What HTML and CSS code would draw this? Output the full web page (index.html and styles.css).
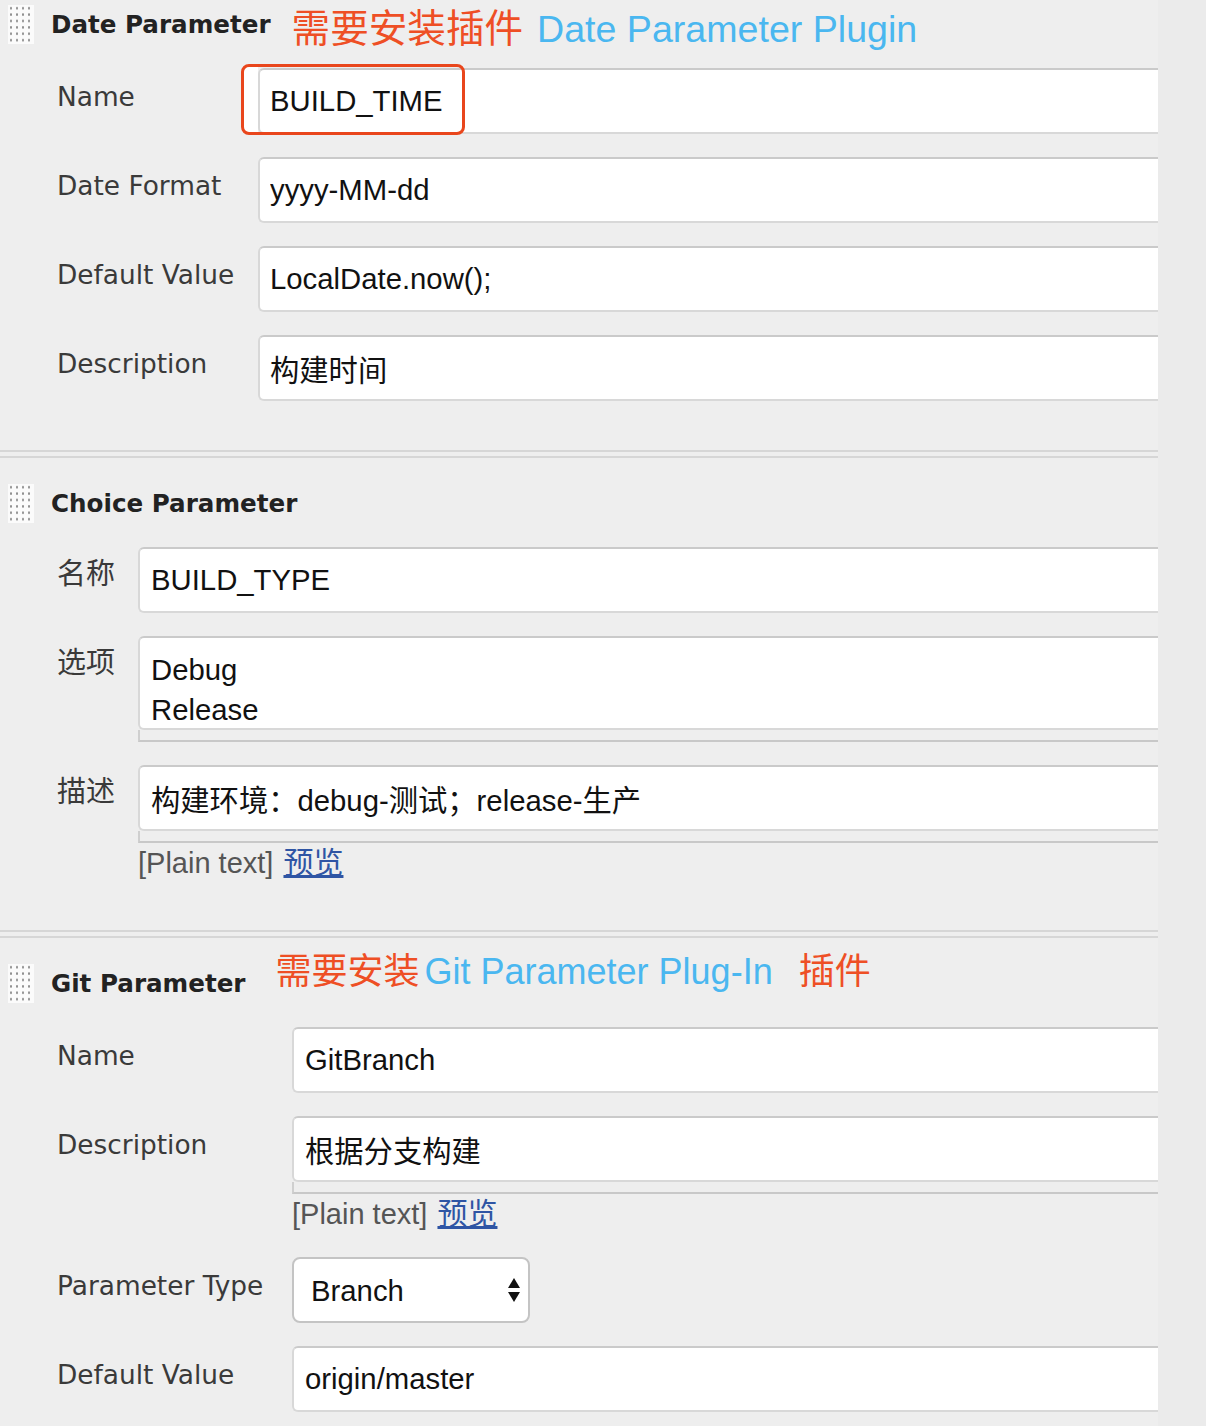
FILE: index.html
```html
<!DOCTYPE html>
<html lang="en">
<head>
    <meta charset="UTF-8">
    <meta name="viewport" content="width=device-width, initial-scale=1.0">
    <title>Jenkins Parameters</title>
    <link rel="stylesheet" href="styles.css">
</head>
<body>
    <div class="page">
        <section class="param date-param">
            <div class="param-head">
                <span class="handle"></span>
                <span class="param-title">Date Parameter</span>
                <span class="note date-note">
                    <span class="note-red">需要安装插件</span>
                    <span class="note-blue">Date Parameter Plugin</span>
                </span>
            </div>
            <div class="row">
                <label class="label">Name</label>
                <div class="field marked">
                    <input class="input" type="text" value="BUILD_TIME">
                    <span class="mark"></span>
                </div>
            </div>
            <div class="row">
                <label class="label">Date Format</label>
                <div class="field"><input class="input" type="text" value="yyyy-MM-dd"></div>
            </div>
            <div class="row">
                <label class="label">Default Value</label>
                <div class="field"><input class="input" type="text" value="LocalDate.now();"></div>
            </div>
            <div class="row">
                <label class="label">Description</label>
                <div class="field"><input class="input" type="text" value="构建时间"></div>
            </div>
        </section>

        <section class="param choice-param">
            <div class="param-head">
                <span class="handle"></span>
                <span class="param-title">Choice Parameter</span>
            </div>
            <div class="row">
                <label class="label cjk">名称</label>
                <div class="field"><input class="input" type="text" value="BUILD_TYPE"></div>
            </div>
            <div class="row">
                <label class="label cjk">选项</label>
                <div class="field">
                    <textarea class="input area" rows="2">Debug
Release</textarea>
                    <div class="grip"></div>
                </div>
            </div>
            <div class="row">
                <label class="label cjk">描述</label>
                <div class="field">
                    <input class="input" type="text" value="构建环境：debug-测试；release-生产">
                    <div class="grip"></div>
                    <div class="hint">[Plain text] <a href="#">预览</a></div>
                </div>
            </div>
        </section>

        <section class="param git-param">
            <div class="param-head">
                <span class="handle"></span>
                <span class="param-title">Git Parameter</span>
                <span class="note git-note">
                    <span class="note-red">需要安装</span><span class="note-blue">Git Parameter Plug-In</span><span class="note-red tail">插件</span>
                </span>
            </div>
            <div class="row">
                <label class="label">Name</label>
                <div class="field"><input class="input" type="text" value="GitBranch"></div>
            </div>
            <div class="row">
                <label class="label">Description</label>
                <div class="field">
                    <input class="input" type="text" value="根据分支构建">
                    <div class="grip"></div>
                    <div class="hint">[Plain text] <a href="#">预览</a></div>
                </div>
            </div>
            <div class="row after-hint">
                <label class="label">Parameter Type</label>
                <div class="field">
                    <div class="select-wrap">
                        <select class="select">
                            <option>Branch</option>
                            <option>Tag</option>
                            <option>Revision</option>
                        </select>
                        <svg class="select-arrows" width="14" height="26" viewBox="0 0 14 26">
                            <path d="M7 1 L13 11 L1 11 Z" fill="#111"/>
                            <path d="M1 15 L13 15 L7 25 Z" fill="#111"/>
                        </svg>
                    </div>
                </div>
            </div>
            <div class="row">
                <label class="label">Default Value</label>
                <div class="field"><input class="input" type="text" value="origin/master"></div>
            </div>
        </section>
    </div>
</body>
</html>
```

FILE: styles.css
```css
* {
    margin: 0;
    padding: 0;
    box-sizing: border-box;
}

body {
    background: #ebebeb;
}

.page {
    width: 1158px;
    min-height: 1426px;
    background: #eeeeee;
    overflow: hidden;
}

.param {
    --label-w: 201px;
}

.date-param {
    padding: 5px 0 49px;
    border-bottom: 2px solid #d6d6d6;
}

.choice-param {
    --label-w: 81px;
    margin-top: 4px;
    padding: 26px 0 50px;
    border-top: 2px solid #d6d6d6;
    border-bottom: 2px solid #d6d6d6;
}

.git-param {
    --label-w: 235px;
    margin-top: 4px;
    padding: 26px 0 20px;
    border-top: 2px solid #d6d6d6;
}

/* section header */

.param-head {
    display: flex;
    align-items: flex-start;
    height: 40px;
    padding-left: 8px;
}

.handle {
    width: 26px;
    height: 39px;
    flex-shrink: 0;
    background-color: #fbfbfb;
    background-image: radial-gradient(circle, #8e8e8e 0.9px, transparent 1.4px);
    background-size: 6px 6.4px;
    background-position: 0 0;
}

.param-title {
    margin: 5px 0 0 17px;
    font-family: "DejaVu Sans", sans-serif;
    font-weight: bold;
    font-size: 24.6px;
    line-height: 30px;
    color: #222;
    white-space: nowrap;
}

.note {
    display: flex;
    align-items: baseline;
    white-space: nowrap;
    font-family: "Liberation Sans", "Noto Sans CJK SC", sans-serif;
}

.note-red {
    color: #ee4f25;
}

.note-blue {
    color: #4ab7f0;
}

.date-note {
    margin: 1px 0 0 21px;
    font-size: 37.6px;
    line-height: 46px;
    gap: 14px;
}

.date-note .note-red {
    font-size: 38.6px;
}

.git-note {
    margin: -15px 0 0 30px;
    font-size: 36px;
    line-height: 46px;
}

.git-note .note-blue {
    margin-left: 5px;
}

.git-note .tail {
    margin-left: 26px;
}

/* rows */

.row {
    display: flex;
    align-items: flex-start;
    margin-top: 23px;
    padding-left: 57px;
}

.row.after-hint {
    margin-top: 26px;
}

.label {
    width: var(--label-w);
    flex-shrink: 0;
    padding-top: 14px;
    font-family: "DejaVu Sans", "Noto Sans CJK SC", sans-serif;
    font-size: 26.4px;
    line-height: 30px;
    color: #3a3a3a;
    white-space: nowrap;
}

.label.cjk {
    font-size: 29px;
    padding-top: 12px;
}

.field {
    flex: 1;
    min-width: 0;
    position: relative;
}

.input {
    display: block;
    width: 100%;
    height: 66px;
    padding: 0 0 0 10px;
    background: #fff;
    border: 2px solid #d8d8d8;
    border-top-color: #cacaca;
    border-right: none;
    border-radius: 6px 0 0 6px;
    font-family: "Liberation Sans", "Noto Sans CJK SC", sans-serif;
    font-size: 29.3px;
    color: #111;
    outline: none;
}

.choice-param .input,
.git-param .input {
    padding-left: 11px;
}

.area {
    height: 94px;
    padding: 12px 0 0 13px;
    line-height: 40px;
    resize: none;
    overflow: hidden;
}

.grip {
    height: 12px;
    border-left: 2px solid #cfcfcf;
    border-bottom: 2px solid #c8c8c8;
}

.hint {
    margin-top: 3px;
    font-family: "Liberation Sans", "Noto Sans CJK SC", sans-serif;
    font-size: 29px;
    line-height: 34px;
    color: #555;
}

.hint a {
    margin-left: 2px;
    font-size: 30px;
    color: #2f55a4;
    text-decoration: underline;
}

/* the red box drawn around the name field */

.mark {
    position: absolute;
    left: -17px;
    top: -4px;
    width: 224px;
    height: 71px;
    border: 3px solid #e9461c;
    border-radius: 8px;
    background: linear-gradient(to right, #fff 14px, transparent 14px);
    pointer-events: none;
}

/* select */

.select-wrap {
    position: relative;
    width: 238px;
}

.select {
    display: block;
    width: 100%;
    height: 66px;
    padding-left: 17px;
    background: #fff;
    border: 2px solid #c4c4c4;
    border-radius: 8px;
    appearance: none;
    -webkit-appearance: none;
    font-family: "Liberation Sans", sans-serif;
    font-size: 29.3px;
    color: #111;
    outline: none;
}

.select-arrows {
    position: absolute;
    right: 9px;
    top: 20px;
    pointer-events: none;
}
```
